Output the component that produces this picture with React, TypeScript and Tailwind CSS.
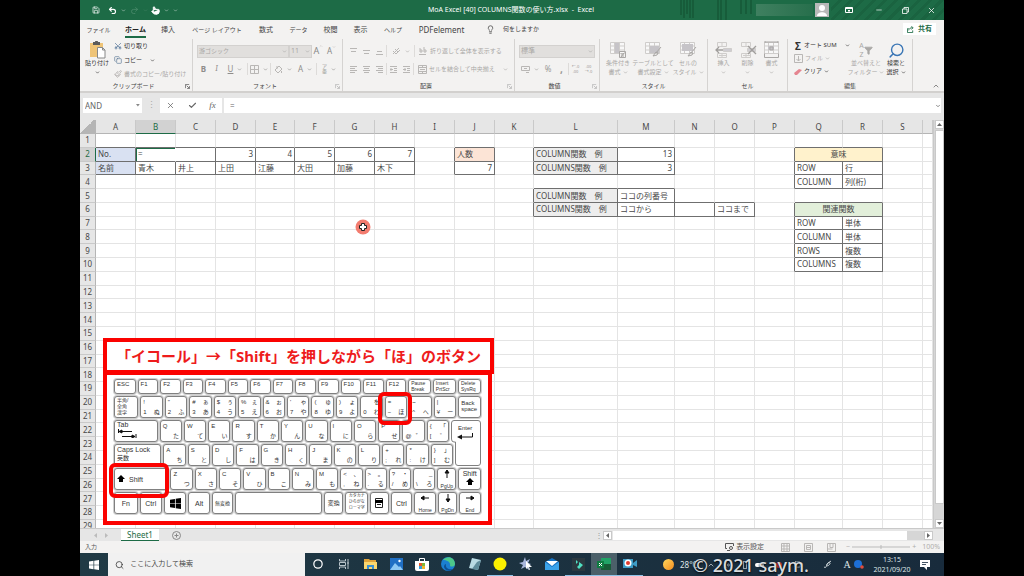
import React from 'react';
import clsx from 'clsx';
import { ChevronDown, ChevronUp, Lightbulb, Search, Check, X, Minus, Square, Scissors, Copy, Paintbrush, Undo2, Redo2, Save, Pointer, Filter, Circle } from 'lucide-react';

type Kids = { children?: React.ReactNode };

const tabs = [
  { name: 'ファイル', cls: 'w-[37px] text-[6px]' },
  { name: 'ホーム', cls: 'w-[37px] text-[7px]' },
  { name: '挿入', cls: 'w-[28px] text-[7px]' },
  { name: 'ページ レイアウト', cls: 'w-[70px] text-[6px]' },
  { name: '数式', cls: 'w-[28px] text-[7px]' },
  { name: 'データ', cls: 'w-[37px] text-[6px]' },
  { name: '校閲', cls: 'w-[27px] text-[7px]' },
  { name: '表示', cls: 'w-[33px] text-[7px]' },
  { name: 'ヘルプ', cls: 'w-[32px] text-[6px]' },
  { name: 'PDFelement', cls: 'w-[65px] text-[8px]' },
];

/* ---------- title bar ---------- */

function TitleBar() {
  return (
    <header className="relative flex h-5 shrink-0 items-center bg-[#1d6b46] text-white">
      <div className="flex flex-1 items-center pl-3">
        <button aria-label="上書き保存" className="w-4"><Save size={8} /></button>
        <button aria-label="元に戻す" className="flex w-[22px] items-center gap-1"><Undo2 size={9} strokeWidth={3} /><ChevronDown size={5} /></button>
        <button aria-label="やり直し" className="flex w-[21px] items-center gap-1 text-[#4f8d6f]"><Redo2 size={9} /><ChevronDown size={5} /></button>
        <button aria-label="タッチ" className="flex w-[22px] items-center gap-1"><Pointer size={9} fill="white" /><ChevronDown size={5} /></button>
        <button aria-label="カスタマイズ"><ChevronDown size={5} /></button>
      </div>
      <h1 className="mr-[14px] text-[7px] whitespace-nowrap">MoA Excel [40] COLUMNS関数の使い方.xlsx&nbsp; -&nbsp; Excel</h1>
      <div className="flex h-full flex-1 items-center justify-end">
        <svg className="h-5 w-[76px]" viewBox="0 0 76 20" stroke="#175c3a" fill="none">
          <path d="M1 0v15M4 0v18M7 0v14M10 0v18M13 0v18M38 0v20M41 0v20M46 0v20M61 0v14M66 0v14M71 0v14" strokeWidth="2" />
        </svg>
        <span className="h-3 w-[57px] bg-linear-to-r from-[#3f8060] to-[#276f4c]" />
        <svg className="mx-[2px] size-[14px]" viewBox="0 0 14 14">
          <path fill="#b9b9b9" d="M0 0h14v14H0z" />
          <circle cx="7" cy="5" r="3" fill="#fff" />
          <path fill="#fff" d="M2 13c0-5 10-5 10 0z" />
        </svg>
        <div className="flex h-full items-center bg-[repeating-linear-gradient(135deg,#1d6b46_0_5px,#1a6340_5px_8px)]">
          <button aria-label="リボンの表示オプション" className="flex w-[35px] justify-center">
            <svg width="8" height="6" viewBox="0 0 8 6" fill="none" stroke="white"><path d="M.5.5h7v5h-7zM.5 1.5h7M4 5V3M3 3.5h2" /></svg>
          </button>
          <button aria-label="最小化" className="flex w-[26px] justify-center"><Minus size={8} /></button>
          <button aria-label="元に戻す(縮小)" className="flex w-[26px] justify-center">
            <svg width="7" height="7" viewBox="0 0 7 7" fill="none" stroke="white" strokeWidth=".8"><path d="M.5 2h4.500v4.500H.5zM2 2V.5h4.500V5H5" /></svg>
          </button>
          <button aria-label="閉じる" className="flex w-[26px] justify-center"><X size={9} /></button>
        </div>
      </div>
    </header>
  );
}

function TabBar() {
  return (
    <nav className="flex h-[18px] shrink-0 items-center bg-[#f3f2f1] text-[#444]">
      {tabs.map((t, i) => (
        <button key={t.name} className={clsx('flex h-full shrink-0 items-center justify-center whitespace-nowrap', t.cls, i === 1 && 'font-bold text-[#222]')}>
          <span className={clsx('border-b-2 pt-1 leading-3', i === 1 ? 'border-[#1d6b46]' : 'border-transparent')}>{t.name}</span>
        </button>
      ))}
      <Lightbulb size={9} className="ml-3 shrink-0" />
      <button className="ml-2 text-[6px] whitespace-nowrap">何をしますか</button>
      <button className="mr-2 ml-auto flex h-3 items-center gap-1 bg-white px-1 text-[7px] font-bold text-[#1d6b46]">
        <svg width="7" height="7" viewBox="0 0 8 8" fill="none" stroke="currentColor"><path d="M2 3H.5v4.500h6V5M2 5c0-2 2-3 4-3M5 .5 7 2 5 4" /></svg>
        共有
      </button>
    </nav>
  );
}

/* ---------- ribbon ---------- */

function Group({ label, width, launcher, children }: Kids & { label: string; width: string; launcher?: string }) {
  return (
    <section className={clsx('flex shrink-0 flex-col border-r border-[#d5d3d1] text-[#aaa8a6]', width)}>
      <div className="h-[42px]">{children}</div>
      <div className="flex h-[10px] items-center px-[2px] text-[6px] leading-[10px] text-[#444]">
        <span className="flex-1 text-center">{label}</span>
        {launcher && (
          <svg width="5" height="5" viewBox="0 0 6 6" fill="none" stroke={launcher}><path d="M.5 5V.5H5M2 2l3 3M5.500 2.500v3h-3" /></svg>
        )}
      </div>
    </section>
  );
}

const Caret = () => <ChevronDown size={5} strokeWidth={3} className="shrink-0" />;
const Bar = () => <span className="h-[12px] w-px shrink-0 bg-[#dddbd9]" />;

function Tool({ label, w = 'w-[13px]', caret, children }: Kids & { label: string; w?: string; caret?: boolean }) {
  return (
    <button aria-label={label} className={clsx('flex shrink-0 items-center justify-center gap-1 text-[8px]', w)}>
      {children}
      {caret && <Caret />}
    </button>
  );
}

function Lines({ d }: { d: string }) {
  return <svg width="9" height="9" viewBox="0 0 9 9" fill="none" stroke="#b9b7b5"><path d={d} /></svg>;
}

function BigTool({ icon, lines, w, dark }: { icon: React.ReactNode; lines: string[]; w: string; dark?: boolean }) {
  return (
    <button className={clsx('flex shrink-0 flex-col items-center pt-[2px] text-[6px] leading-[9px] whitespace-nowrap', w, dark && 'text-[#333]')}>
      <span className="flex h-[18px] items-center justify-center">{icon}</span>
      {lines.map((l, i) => (
        <span key={l} className="flex items-center gap-[2px]">{l}{i === 1 && <Caret />}</span>
      ))}
      {lines.length === 1 && <span className="flex h-[9px] items-center"><Caret /></span>}
    </button>
  );
}

const GridIcon = ({ extra, fill }: { extra: string; fill?: string }) => (
  <svg width="18" height="18" viewBox="0 0 18 18" fill="none" stroke="#cfcdcb">
    <path fill="#f8f8f8" d="M1.500 1.500h14v11h-14zM1.500 5h14M1.500 9h14M5.500 1.500v11M10.500 1.500v11" />
    {fill && <path d={fill} fill="#c6c4c8" stroke="none" />}
    <path d={extra} stroke="#a9a7a5" />
  </svg>
);

const CellsIcon = ({ extra }: { extra: string }) => (
  <svg width="18" height="18" viewBox="0 0 18 18" fill="none" stroke="#cfcdcb">
    <path d="M2.500 1.500h9v4h-9zM7 1.500v4M2.500 12.500h9v4h-9zM7 12.500v4M4 14.500h7" />
    <path fill="#cfcdd2" d="M8.500 7.500h8v3h-8z" />
    <path d={extra} stroke="#a09e9c" strokeWidth="1.300" />
  </svg>
);

function Ribbon() {
  return (
    <div className="flex h-[55px] shrink-0 border-b-2 border-[#d2d0ce] bg-[#f3f2f1] pt-px">
      <Group label="クリップボード" width="w-[113px]" launcher="#666">
        <div className="flex">
          <BigTool w="w-[34px]" dark lines={['貼り付け']} icon={
            <svg width="18" height="18" viewBox="0 0 18 18">
              <path fill="#efc477" d="M2 2h13v14H2z" />
              <path fill="#5b5b5b" d="M5 1h2c0-2 3-2 3 0h2v3H5z" />
              <path fill="#fff" stroke="#888" d="M9.500 6.500h5l2.500 2.500v8h-7.500zM14.500 6.500V9H17" />
            </svg>
          } />
          <div className="flex flex-col text-[6px] whitespace-nowrap text-[#333]">
            <button className="flex h-[14px] items-center gap-[2px]"><Scissors size={8} className="-rotate-90 text-[#4a6c94]" />切り取り</button>
            <button className="flex h-[14px] items-center gap-[2px]"><Copy size={8} className="text-[#5c7896]" />コピー<span className="w-1" /><Caret /></button>
            <button className="flex h-[14px] items-center gap-[2px] text-[#aaa8a6]"><Paintbrush size={8} />書式のコピー/貼り付け</button>
          </div>
        </div>
      </Group>

      <Group label="フォント" width="w-[150px]" launcher="#bbb">
        <div className="flex h-6 items-center pl-1">
          <button className="flex h-[13px] w-[92px] items-center justify-between border border-[#d3d1cf] bg-[#e1dfdd] px-px text-[6px]">游ゴシック<Caret /></button>
          <button className="flex h-[13px] w-[23px] items-center justify-between border border-[#d3d1cf] bg-[#e1dfdd] px-px text-[7px]">11<Caret /></button>
          <Tool label="拡大"><span className="text-[9px] text-[#888]">A</span><ChevronUp size={4} className="-ml-1 self-start" /></Tool>
          <Tool label="縮小"><span className="text-[8px] text-[#888]">A</span><ChevronDown size={4} className="-ml-1 self-start" /></Tool>
        </div>
        <div className="flex items-center pl-1 text-[#8f8d8b]">
          <Tool label="太字"><b>B</b></Tool>
          <Tool label="斜体"><i className="font-serif">I</i></Tool>
          <Tool label="下線" w="w-[24px]" caret><u>U</u></Tool>
          <Bar />
          <Tool label="罫線" w="w-[22px]" caret><Lines d="M.5.5h8v8h-8zM4.500 0v9M0 4.500h9" /></Tool>
          <Bar />
          <Tool label="塗りつぶし" w="w-[23px]" caret><Lines d="M1 5l4-4 3 3-4 4zM7.500 6v2M3 1v3" /></Tool>
          <Tool label="文字色" w="w-[22px]" caret>A</Tool>
          <Bar />
          <Tool label="ふりがな" w="w-[24px]" caret><span className="flex flex-col text-[5px] leading-[5px]"><span>ア</span><span>亜</span></span></Tool>
        </div>
      </Group>

      <Group label="配置" width="w-[172px]" launcher="#bbb">
        <div className="flex h-6 items-center pl-1">
          <Tool label="上揃え"><Lines d="M1 1.500h7M2 4.500h5" /></Tool>
          <Tool label="上下中央"><Lines d="M1 3.500h7M2 6.500h5" /></Tool>
          <Tool label="下揃え"><Lines d="M2 4.500h5M1 7.500h7" /></Tool>
          <Bar />
          <Tool label="方向" w="w-[27px]" caret><Lines d="M1 4l3 3M3 2l3 3M1 7l6-6M4 7l4-4" /></Tool>
          <Bar />
          <button className="ml-1 flex items-center gap-[2px] text-[6px] whitespace-nowrap"><Lines d="M1 1v4h2V3H1M5 0v5h2V3H5M0 7.500h7" />折り返して全体を表示する</button>
        </div>
        <div className="flex items-center pl-1">
          <Tool label="左揃え"><Lines d="M1 1.500h7M1 3.500h5M1 5.500h7M1 7.500h5" /></Tool>
          <Tool label="中央揃え"><Lines d="M1 1.500h7M2 3.500h5M1 5.500h7M2 7.500h5" /></Tool>
          <Tool label="右揃え"><Lines d="M1 1.500h7M3 3.500h5M1 5.500h7M3 7.500h5" /></Tool>
          <Bar />
          <Tool label="インデント減"><Lines d="M1 1.500h7M5 3.500h3M5 5.500h3M1 7.500h7M4 4.500H1M2 3v3" /></Tool>
          <Tool label="インデント増"><Lines d="M1 1.500h7M5 3.500h3M5 5.500h3M1 7.500h7M4 4.500H1M3 3v3" /></Tool>
          <Bar />
          <button className="ml-1 flex items-center gap-[2px] text-[6px] whitespace-nowrap"><Lines d="M.5.5h8v8h-8zM.5 2.500h8M.5 6.500h8M4.500 0v2M4.500 7v2M2 4.500h5" />セルを結合して中央揃え<span className="w-1" /><Caret /></button>
        </div>
      </Group>

      <Group label="数値" width="w-[85px]" launcher="#bbb">
        <div className="flex h-6 items-center px-1">
          <button className="flex h-[13px] flex-1 items-center justify-between border border-[#d3d1cf] bg-[#e1dfdd] px-px text-[7px]">標準<Caret /></button>
        </div>
        <div className="flex items-center pl-1 text-[#9a9896]">
          <Tool label="通貨" w="w-[22px]" caret><Lines d="M.5 1.500h8v4h-8zM3 3.500h3M5 7.500h3" /></Tool>
          <Tool label="パーセント" w="w-[14px]">%</Tool>
          <Tool label="桁区切り"><b className="text-[10px] leading-none">,</b></Tool>
          <Bar />
          <Tool label="小数点以下の桁数を増やす"><span className="text-[4px] leading-[5px]">←.0<br />.00</span></Tool>
          <Tool label="小数点以下の桁数を減らす"><span className="text-[4px] leading-[5px]">.00<br />→.0</span></Tool>
        </div>
      </Group>

      <Group label="スタイル" width="w-[108px]">
        <div className="flex">
          <BigTool w="w-[36px]" lines={['条件付き', '書式']} icon={<GridIcon fill="M6 2h4v10H6z" extra="M10.500 10.500h6v6h-6zM12 13h3M12 15h3M15 12l-3 4" />} />
          <BigTool w="w-[34px]" lines={['テーブルとして', '書式設定']} icon={<GridIcon fill="M6 5h9v7H6z" extra="M17 6l-5 6M12 11l-3 4 4-1 1-2z" />} />
          <BigTool w="w-[36px]" lines={['セルの', 'スタイル']} icon={<GridIcon fill="M3 3h11v7H3z" extra="M17 6l-5 6M12 11l-3 4 4-1 1-2z" />} />
        </div>
      </Group>

      <Group label="セル" width="w-[80px]">
        <div className="flex justify-center">
          <BigTool w="w-[24px]" lines={['挿入']} icon={<CellsIcon extra="M8 9H1M4 6L1 9l3 3" />} />
          <BigTool w="w-[24px]" lines={['削除']} icon={<CellsIcon extra="M9 5l8 8M17 5l-8 8" />} />
          <BigTool w="w-[24px]" lines={['書式']} icon={<GridIcon fill="M5 5h6v4H5z" extra="M2 1h13M2 0v2M15 0v2M1.500 12.500v4h14v-4M7 6h3v3H7z" />} />
        </div>
      </Group>

      <Group label="編集" width="w-[125px]">
        <div className="flex">
          <div className="flex w-[62px] flex-col pl-[6px] text-[6px] whitespace-nowrap">
            <button className="flex h-[13px] items-center gap-[2px] text-[#333]"><b className="w-2 text-[10px] leading-none">Σ</b>オート SUM<span className="w-1" /><Caret /></button>
            <button className="flex h-[13px] items-center gap-[2px]"><Lines d="M.5.5h8v8h-8zM4.500 2v5M2.500 5l2 2 2-2" />フィル<Caret /></button>
            <button className="flex h-[13px] items-center gap-[2px] text-[#333]">
              <svg width="8" height="8" viewBox="0 0 8 8"><path fill="#e58590" d="M0 5l5-4 3 1-5 5-2 0z" /></svg>
              クリア<Caret />
            </button>
          </div>
          <BigTool w="w-[32px]" lines={['並べ替えと', 'フィルター']} icon={
            <span className="flex items-center text-[7px] leading-[9px]"><span className="flex flex-col"><span>A</span><span>Z</span></span><Filter size={9} fill="currentColor" /></span>
          } />
          <BigTool w="w-[28px]" dark lines={['検索と', '選択']} icon={<Search size={17} className="-scale-x-100 text-[#3a76b5]" />} />
        </div>
      </Group>
      <button aria-label="リボンを折りたたむ" className="mr-1 mb-px ml-auto self-end"><ChevronUp size={8} className="text-[#555]" /></button>
    </div>
  );
}

function FormulaBar() {
  return (
    <div className="flex h-[27px] shrink-0 bg-[#e6e6e6] px-[3px] pt-[5px] pb-[7px] text-[#666]">
      <div className="flex w-[59px] items-center bg-white px-[2px]">
        <input aria-label="名前ボックス" defaultValue="AND" className="w-full min-w-0 text-[8px] outline-none" />
        <svg width="4" height="3" viewBox="0 0 4 3"><path fill="#888" d="M0 0h4L2 2.500z" /></svg>
      </div>
      <span className="w-[18px] text-center text-[9px] leading-[14px] text-[#aaa]">⋮</span>
      <div className="flex w-[62px] items-center justify-around bg-white">
        <button aria-label="キャンセル"><X size={9} /></button>
        <button aria-label="入力"><Check size={9} strokeWidth={3} /></button>
        <button aria-label="関数の挿入" className="font-['Liberation_Serif',serif] text-[9px] leading-none italic">fx</button>
      </div>
      <div className="ml-[2px] flex flex-1 items-center bg-white px-[6px]">
        <input aria-label="数式バー" defaultValue="=" className="w-full text-[8px] outline-none" />
      </div>
      <span className="flex w-2 items-center justify-end bg-white"><ChevronDown size={6} strokeWidth={3} /></span>
    </div>
  );
}

/* ---------- sheet ---------- */

const columns = [
  ['A', 40], ['B', 40], ['C', 40], ['D', 40], ['E', 39], ['F', 40], ['G', 40], ['H', 40], ['I', 40], ['J', 40],
  ['K', 39], ['L', 84], ['M', 57], ['N', 40], ['O', 40], ['P', 40], ['Q', 48], ['R', 40], ['S', 40], ['', 10],
] as const;
const letters = columns.map(c => c[0]).join('');

const values: Record<string, string> = {
  A2: 'No.', D2: '3', E2: '4', F2: '5', G2: '6', H2: '7',
  A3: '名前', B3: '青木', C3: '井上', D3: '上田', E3: '江藤', F3: '大田', G3: '加藤', H3: '木下',
  J2: '人数', J3: '7',
  L2: 'COLUMN関数　例', M2: '13', L3: 'COLUMNS関数　例', M3: '3',
  L5: 'COLUMN関数　例', M5: 'ココの列番号', L6: 'COLUMNS関数　例', M6: 'ココから', O6: 'ココまで',
  Q2: '意味', Q3: 'ROW', R3: '行', Q4: 'COLUMN', R4: '列(桁)',
  Q6: '関連関数', Q7: 'ROW', R7: '単体', Q8: 'COLUMN', R8: '単体', Q9: 'ROWS', R9: '複数', Q10: 'COLUMNS', R10: '複数',
};

const fills: Record<string, string> = {
  A2: 'bg-[#d9e1f2]', A3: 'bg-[#d9e1f2]', J2: 'bg-[#fce4d6]',
  L2: 'bg-[#ededed]', L3: 'bg-[#ededed]', L5: 'bg-[#ededed]', L6: 'bg-[#ededed]',
  Q2: 'bg-[#fff2cc]', Q6: 'bg-[#e2efda]',
};

// framed ranges: first column, first row, last column, last row
const frames: [string, number, string, number][] = [
  ['A', 2, 'H', 3], ['J', 2, 'J', 3], ['L', 2, 'M', 3], ['L', 5, 'M', 5], ['L', 6, 'O', 6], ['Q', 2, 'R', 4], ['Q', 6, 'R', 10],
];

function framed(c: number, r: number) {
  return frames.some(([c1, r1, c2, r2]) => c >= letters.indexOf(c1) && c <= letters.indexOf(c2) && r >= r1 && r <= r2);
}

function Cell({ c, r }: { c: number; r: number }) {
  const id = columns[c][0] + r;
  const text = values[id] ?? '';
  const merged = id === 'Q2' || id === 'Q6';
  const right = framed(c, r) || (c + 1 < letters.length && framed(c + 1, r));
  const bottom = framed(c, r) || framed(c, r + 1);
  return (
    <td
      colSpan={merged ? 2 : 1}
      className={clsx(
        'overflow-hidden border-r border-b px-[2px] whitespace-nowrap',
        fills[id],
        id === 'B2' ? 'border-r-white' : right ? 'border-r-[#6f6f6f]' : 'border-r-[#e4e4e4]',
        bottom ? 'border-b-[#6f6f6f]' : 'border-b-[#e4e4e4]',
        merged ? 'text-center' : /^\d+$/.test(text) ? 'text-right' : 'text-left',
        id === 'B2' && 'shadow-[inset_1px_1px_0_#1d6b46]'
      )}
    >
      {id === 'B2' ? <input aria-label="B2" defaultValue="=" className="block h-[10px] w-full text-[8px] outline-none" /> : text}
    </td>
  );
}

function Sheet() {
  const rows = Array.from({ length: 29 }, (_, i) => i + 1);
  return (
    <table className="h-[414px] w-full table-fixed border-separate border-spacing-0 bg-white text-[8px] leading-[10px] text-[#484848]">
      <colgroup>
        <col style={{ width: 16 }} />
        {columns.map(([name, w]) => <col key={name} style={{ width: w }} />)}
      </colgroup>
      <thead>
        <tr className="h-[14px]">
          <th className="border-r border-b border-[#b5b5b5] bg-[linear-gradient(135deg,#e6e6e6_50%,#b5b5b5_50%)]" />
          {columns.map(([name]) => (
            <th key={name} className={clsx('border-r border-b border-r-[#c9c9c9] font-normal', name === 'B' ? 'border-b-[#1d6b46] bg-[#d2d2d2] text-[#1d6b46]' : 'border-b-[#b5b5b5] bg-[#e6e6e6]')}>{name}</th>
          ))}
        </tr>
      </thead>
      <tbody>
        {rows.map(r => (
          <tr key={r}>
            <th className={clsx('border-r border-b border-b-[#c9c9c9] font-normal', r === 2 ? 'border-r-[#1d6b46] bg-[#d2d2d2] text-[#1d6b46]' : 'border-r-[#b5b5b5] bg-[#e6e6e6]')}>{r}</th>
            {columns.map(([name], c) => (name === 'R' && (r === 2 || r === 6) ? null : <Cell key={name} c={c} r={r} />))}
          </tr>
        ))}
      </tbody>
    </table>
  );
}

/* ---------- keyboard ---------- */

type KeyDef = { w: number; at?: string[]; node?: React.ReactNode };

// four corners: top left, top right, bottom left, bottom right
const corner = (s: string, w = 63): KeyDef[] => s.split(' ').map(k => ({ w, at: k.split('').map(ch => (ch === '␣' ? '' : ch)) }));
const alpha = (s: string): KeyDef[] => s.split(' ').map(k => ({ w: 63, at: [k[0], '', '', k[1]] }));

const two = (a: string, b: string) => <span className="block text-[5px] leading-[6px]">{a}<br />{b}</span>;

const fnRow: KeyDef[] = [
  { w: 62, node: 'ESC' },
  ...Array.from({ length: 12 }, (_, i) => ({ w: 59, node: `F${i + 1}` })),
  { w: 65, node: two('Pause', 'Break') },
  { w: 66, node: two('Insert', 'PrtScr') },
  { w: 66, node: two('Delete', 'SysRq') },
];
const digitRow: KeyDef[] = [
  { w: 68, node: <span className="block text-[5px] leading-[6px]">半角/<br />全角<br />漢字</span> },
  ...corner('!␣1ぬ "␣2ふ #ぁ3あ $ぅ4う %ぇ5え &ぉ6お \'ゃ7や (ゅ8ゆ )ょ9よ ␣を0わ =␣−ほ ~␣^へ |␣¥ー'),
  { w: 64, node: <span className="block pt-[3px] text-[6px] leading-[6px]">Back<br />space</span> },
];
const tabRow: KeyDef[] = [
  {
    w: 122,
    node: (
      <span className="block text-[7px] leading-[8px]">
        Tab
        <svg width="20" height="9" viewBox="0 0 20 9" fill="none" stroke="#111"><path d="M1.500 0v4M2 2.500h13M19 5v4M5 7.500h13" /><path fill="#111" d="M5 1L2 2.500 5 4zM15 6l3 1.500L15 9z" /></svg>
      </span>
    ),
  },
  ...alpha('Qた Wて Eい Rす Tか Yん Uな Iに Oら Pせ'),
  ...corner('␣␣@゛ {「[゜'),
];
const capsRow: KeyDef[] = [
  { w: 132, node: <span className="block pt-px text-[7px] leading-[8px] whitespace-nowrap">Caps Lock<br /><span className="text-[6px]">英数</span></span> },
  ...alpha('Aち Sと Dし Fは Gき Hく Jま Kの Lり'),
  ...corner('+␣;れ *␣:け }」]む'),
];
const shiftArrow = <svg className="inline" width="8" height="8" viewBox="0 0 8 8"><path d="M4 0l4 4H6v3H2V4H0z" /></svg>;
const arrow = (rot: string, label: string) => (
  <span className="flex h-full flex-col items-center justify-between text-[5px] leading-[6px]">
    <svg className={rot} width="10" height="10" viewBox="0 0 10 10" stroke="#111" fill="none"><path d="M1 5h8" /><path fill="#111" d="M1 5l3-2v4z" /></svg>
    {label}
  </span>
);
const shiftRow: KeyDef[] = [
  { w: 152, node: <span className="flex h-full items-center gap-1 text-[7px]">{shiftArrow}Shift</span> },
  ...alpha('Zつ Xさ Cそ Vひ Bこ Nみ Mも'),
  ...corner('<、,ね >。.る ?・/め ␣_\\ろ'),
  { w: 54, node: arrow('rotate-90', 'PgUp') },
  { w: 64, node: <span className="flex flex-col items-center text-[7px] leading-[9px]">Shift{shiftArrow}</span> },
];
const mid = (t: React.ReactNode, cls = 'text-[7px]') => <span className={clsx('flex h-full items-center justify-center whitespace-nowrap', cls)}>{t}</span>;
const bottomRow: KeyDef[] = [
  { w: 68, node: mid('Fn') },
  { w: 65, node: mid('Ctrl') },
  { w: 64, node: mid(<svg width="11" height="11" viewBox="0 0 10 10"><path d="M0 1.500l4.500-.7v3.900H0zM5.200.7L10 0v4.700H5.200zM0 5.300h4.500v3.900L0 8.500zM5.200 5.300H10V10l-4.800-.7z" /></svg>) },
  { w: 64, node: mid('Alt') },
  { w: 60, node: mid('無変換', 'text-[5px]') },
  { w: 250 },
  { w: 55, node: mid('変換', 'text-[6px]') },
  { w: 66, node: <span className="block text-center text-[4px] leading-[6px] whitespace-nowrap">カタカナ<br />ひらがな<br />ローマ字</span> },
  { w: 54, node: mid(<svg width="8" height="10" viewBox="0 0 8 10"><path fill="none" stroke="#222" d="M.5.5h7v9h-7zM2 6.500h4" /><path d="M0 2h8v3H0z" /></svg>) },
  { w: 62, node: mid('Ctrl') },
  { w: 64, node: arrow('', 'Home') },
  { w: 54, node: arrow('-rotate-90', 'PgDn') },
  { w: 64, node: arrow('rotate-180', 'End') },
];

function KeyRow({ keys, cls = 'h-[22px]' }: { keys: KeyDef[]; cls?: string }) {
  return (
    <div className={clsx('flex gap-[2px]', cls)}>
      {keys.map((k, i) => (
        // padding and border already take 6px of every key
        <div key={i} className="min-w-0 basis-0 rounded-[3px] border border-[#808080] bg-white px-[2px] text-[6px] leading-[9px] text-[#333] ring-1 ring-[#cfcfcf]" style={{ flexGrow: k.w - 18 }}>
          {k.at ? (
            <div className="grid h-full grid-cols-2 grid-rows-2 items-center leading-[9px]">
              {k.at.map((ch, j) => <span key={j} className={j % 2 ? 'text-right' : 'text-left'}>{ch}</span>)}
            </div>
          ) : k.node}
        </div>
      ))}
    </div>
  );
}

function Keyboard() {
  return (
    <figure className="absolute top-[218px] left-[23px] w-[391px] font-['Liberation_Sans','Noto_Sans_CJK_JP',sans-serif]">
      <figcaption className="flex h-[36px] items-center justify-center border-4 border-[#fb0200] bg-white font-['Noto_Sans','Noto_Sans_CJK_JP',sans-serif] text-[15px] font-bold whitespace-nowrap text-[#ee1c1c]">
        「イコール」→「Shift」を押しながら「ほ」のボタン
      </figcaption>
      <div className="-mt-[3px] mr-[2px] flex flex-col gap-[2px] border-4 border-[#fb0200] bg-white px-[7px] pt-1 pb-[7px]">
        <KeyRow keys={fnRow} cls="h-[15px]" />
        <KeyRow keys={digitRow} />
        <div className="flex">
          <div className="flex flex-1 flex-col gap-[2px]">
            <KeyRow keys={tabRow} />
            <KeyRow keys={capsRow} cls="-mr-1 h-[22px]" />
          </div>
          <div className="relative ml-[2px] w-[30px] text-[6px] leading-[8px] text-[#333]">
            <svg className="h-[46px] w-full" viewBox="0 0 30 46" fill="#fff" stroke="#808080">
              <path d="M3 .5h24q2.500 0 2.500 2.500v40q0 2.500-2.500 2.500H7q-2.500 0-2.500-2.500V22H3Q.5 22 .5 19V3Q.5.5 3 .5z" />
              <path fill="none" stroke="#111" d="M21.500 13v4H9" />
              <path fill="#111" stroke="none" d="M6 17l5-2.500v5z" />
            </svg>
            <span className="absolute top-1 left-[7px]">Enter</span>
          </div>
        </div>
        <KeyRow keys={shiftRow} />
        <KeyRow keys={bottomRow} />
      </div>
      <span className="absolute top-[125px] left-[6px] h-[35px] w-[60px] rounded-md border-4 border-[#fb0200]" />
      <span className="absolute top-[54px] left-[275px] h-[33px] w-[34px] rounded-md border-4 border-[#fb0200]" />
    </figure>
  );
}

const arrowBox = "flex size-[9px] items-center justify-center border border-[#c9c9c9] bg-white text-[#555]";
const Tri = ({ d }: { d: string }) => <svg width="5" height="5" viewBox="0 0 5 5"><path fill="#666" d={d} /></svg>;

function SheetArea() {
  return (
    <main className="relative flex min-h-0 flex-1 overflow-hidden">
      <div className="min-w-0 flex-1"><Sheet /></div>
      <div className="flex w-[11px] shrink-0 flex-col items-center border-l border-[#c9c9c9] bg-[#d6d6d6]">
        <button aria-label="上へ" className={arrowBox}><Tri d="M0 4h5L2.500 1z" /></button>
        <span className="mt-px mb-[15px] w-[9px] flex-1 border border-[#c9c9c9] bg-white" />
        <button aria-label="下へ" className={arrowBox}><Tri d="M0 1h5L2.500 4z" /></button>
      </div>
      <Keyboard />
      <svg className="absolute top-[99px] left-[275px]" width="16" height="16" viewBox="0 0 16 16">
        <circle cx="8" cy="8" r="7.500" fill="#f37c6f" />
        <path fill="#fff" stroke="#222" d="M6.500 4.500h3v2h2v3h-2v2h-3v-2h-2v-3h2z" />
      </svg>
    </main>
  );
}

/* ---------- bottom bars ---------- */

function SheetTabs() {
  return (
    <div className="flex h-[13px] shrink-0 items-center border-t border-[#c9c9c9] bg-[#e6e6e6] text-[8px]">
      <span className="flex w-[41px] items-center justify-center gap-2">
        <svg width="3" height="5" viewBox="0 0 3 5"><path fill="#bbb" d="M3 0v5L0 2.500z" /></svg>
        <svg width="3" height="5" viewBox="0 0 3 5"><path fill="#bbb" d="M0 0v5l3-2.500z" /></svg>
      </span>
      <button className="flex h-full w-[38px] items-center justify-center border-b border-[#1d6b46] bg-white text-[#1d6b46]">Sheet1</button>
      <button aria-label="新しいシート" className="ml-[13px]">
        <svg width="9" height="9" viewBox="0 0 9 9" fill="none" stroke="#888"><circle cx="4.500" cy="4.500" r="4" /><path d="M4.500 2.500v4M2.500 4.500h4" /></svg>
      </button>
      <div className="ml-auto flex w-[349px] items-center">
        <span className="w-[8px] text-[8px] leading-none text-[#999]">⋮</span>
        <button aria-label="左へ" className={arrowBox}><Tri d="M4 0v5L1 2.500z" /></button>
        <span className="ml-px h-[9px] flex-1 bg-white" />
        <span className="h-[9px] w-[17px] bg-[#d6d6d6]" />
        <button aria-label="右へ" className={clsx(arrowBox, 'mr-[11px]')}><Tri d="M1 0v5l3-2.500z" /></button>
      </div>
    </div>
  );
}

function StatusBar() {
  return (
    <div className="flex h-3 shrink-0 items-center bg-[#f3f2f1] pr-1 pl-[5px] text-[6px] text-[#555]">
      <span>入力</span>
      <button className="mr-[17px] ml-auto flex items-center gap-[2px] text-[7px]">
        <svg width="9" height="8" viewBox="0 0 9 8" fill="none" stroke="#555"><path d="M2 5.500H.5v-5h8V3M2 7.500h3" /><circle cx="6" cy="5" r="1.500" /></svg>
        表示設定
      </button>
      <div className="mr-[10px] flex gap-[14px]">
        <Lines d="M.5.5h8v8h-8zM.5 3h8M.5 6h8M3 .5v8M6 .5v8" />
        <Lines d="M.5.5h8v8h-8zM2.500 2.500h4v4h-4zM3 4.500h3" />
        <Lines d="M.5.5h8v8h-8zM3 .5v4h3v-4M.5 6h5" />
      </div>
      <div className="flex items-center gap-[2px] text-[7px] text-[#b0aeac]">
        <span>−</span>
        <svg width="58" height="6" viewBox="0 0 58 6" stroke="#bbb"><path d="M0 3h58M29 1v4" /></svg>
        <span>+</span>
        <span className="ml-1">100%</span>
      </div>
    </div>
  );
}

const apps: { name: string; icon: React.ReactNode; open?: boolean; active?: boolean }[] = [
  { name: 'Cortana', icon: <Circle size={10} color="#fff" strokeWidth={3} /> },
  { name: 'タスク ビュー', icon: <svg width="10" height="10" viewBox="0 0 10 10" fill="none" stroke="#b8c4ca"><path d="M.5 0v2h6V0M.5 3.500h6v3h-6zM.5 10V8h6v2M9 0v10M8 4h2" /></svg> },
  { name: 'エクスプローラー', icon: <svg width="13" height="12" viewBox="0 0 13 12"><path fill="#e0a33a" d="M0 1h5l1 1h6v9H0z" /><path fill="#fbd66e" d="M0 4h13v7H0z" /><path fill="#3b8fd0" d="M3 7h7v4H8V9H5v2H3z" /></svg> },
  { name: 'フォト', icon: <svg width="13" height="12" viewBox="0 0 13 12"><path fill="#1f6fc4" d="M0 0h13v12H0z" /><path fill="#8cc8f4" d="M0 12l5-7 4 4 1-1 3 4z" /><circle cx="9.500" cy="3" r="1.200" fill="#fff" /></svg> },
  { name: 'Microsoft Store', icon: <svg width="14" height="14" viewBox="0 0 14 14"><path fill="none" stroke="#fff" d="M4.500 4V1.500h5V4" /><path fill="#fff" d="M0 4h14v8q0 2-2 2H2q-2 0-2-2z" /><path fill="#e4562c" d="M4 6h3v3H4z" /><path fill="#7cb83a" d="M7 6h3v3H7z" /><path fill="#2f9fe0" d="M4 9h3v3H4z" /><path fill="#f3b52c" d="M7 9h3v3H7z" /></svg> },
  { name: 'Edge', icon: <svg width="14" height="14" viewBox="0 0 14 14"><circle cx="7" cy="7" r="7" fill="#1b7fd1" /><path fill="#4dc88a" d="M2 3c4-5 12-3 12 4 0 3-4 3-5 2 1-4-3-6-7-6z" /><path fill="#0d4f94" d="M5 7c-1 4 3 6 7 5-3 3-8 2-9-2 0-2 1-3 2-3z" /></svg> },
  { name: 'メモ帳', icon: <svg width="13" height="13" viewBox="0 0 13 13"><path fill="#b9dbe4" d="M4 0l9 2-3 10-9-2z" /><path fill="#5f8c9b" d="M9 4l4-2-3 10-6-1z" /></svg> },
  { name: '録画', open: true, icon: <svg width="14" height="14" viewBox="0 0 14 14"><circle cx="7" cy="7" r="6.500" fill="#fbf000" /></svg> },
  { name: 'ポインター', icon: <svg width="14" height="14" viewBox="0 0 14 14"><path fill="#a8b6dc" d="M6 0l1 4 4-2-2 4 3 1-3 2 1 4-4-3-4 2 2-4-4-2 4-1z" /><path fill="#fff" d="M7 4v8l2-2 1 3 1-.5-1-2.500h3z" /></svg> },
  { name: 'メール', icon: <svg width="14" height="12" viewBox="0 0 14 12"><path fill="#1673c4" d="M0 4l7-4 7 4v8H0z" /><path fill="#fff" d="M1 3h12L7 8z" /><path fill="#3ba3ea" d="M0 4l7 5 7-5v8H0z" /></svg> },
  { name: 'Filmora', open: true, icon: <svg width="13" height="13" viewBox="0 0 13 13"><path fill="#2b3940" d="M0 0h13v13H0z" /><path fill="#4fe0c2" d="M4 2l2 2-2 2zM7 4l4 3-4 4-2-2 2-2z" /></svg> },
  { name: 'Excel', open: true, active: true, icon: <svg width="14" height="12" viewBox="0 0 14 12"><path fill="#21a366" d="M4 0h10v12H4z" /><path fill="#185c37" d="M9 6h5v6H4V6z" /><path fill="#107c41" d="M0 3h7v7H0z" /><path stroke="#fff" d="M2 5l3 3M5 5L2 8" /></svg> },
  { name: 'カメラ', open: true, icon: <svg width="14" height="12" viewBox="0 0 14 12"><path fill="#3d9cc6" d="M0 1h10v9H0zM10 5l4-3v7l-4-2z" /><circle cx="5" cy="5" r="3.500" fill="#fff" /><circle cx="5" cy="5" r="2" fill="#e23c2c" /></svg> },
];

function Taskbar() {
  return (
    <footer className="relative flex h-[23px] shrink-0 items-center bg-linear-to-r from-[#203a45] to-[#182b3c] text-[7px] text-[#dfe5e8]">
      <button aria-label="スタート" className="flex w-7 justify-center">
        <svg width="10" height="10" viewBox="0 0 10 10" fill="#fff"><path d="M0 1.500l4.500-.7v3.900H0zM5.200.7L10 0v4.700H5.200zM0 5.300h4.500v3.900L0 8.500zM5.200 5.300H10V10l-4.800-.7z" /></svg>
      </button>
      <label className="flex h-full w-[197px] items-center gap-[6px] bg-[#f1f1f1] px-[7px] text-[#333]">
        <Search size={10} />
        <input aria-label="検索" placeholder="ここに入力して検索" className="w-full text-[7px] outline-none placeholder:text-[#444]" />
      </label>
      {apps.map(a => (
        <button key={a.name} aria-label={a.name} className={clsx('flex h-full w-[26px] shrink-0 items-center justify-center border-b', a.open ? 'border-[#8fc3e8]' : 'border-transparent', a.active && 'bg-[#4b6069]')}>{a.icon}</button>
      ))}
      <div className="ml-auto flex items-center">
        <span className="size-[11px] rounded-full bg-linear-to-br from-[#ffd75a] to-[#f08c1e]" />
        <span className="ml-[6px] w-[27px] text-[8px]">28°C</span>
        <ChevronUp size={8} className="mr-[9px]" />
        <svg className="mr-[10px]" width="9" height="8" viewBox="0 0 9 8" fill="none" stroke="#9aa7ae"><path d="M2 1q-2 3 0 6M7 1q2 3 0 6" /><circle cx="4.500" cy="4" r="1" /></svg>
        <span className="mr-2 h-2 w-1 border border-[#9aa7ae]" />
        <span className="mr-3 h-1 w-[9px] rounded bg-white" />
        <span className="mr-3 size-[6px] rounded-full bg-[#c83434]" />
        <Square size={7} className="mr-[22px]" />
        <svg width="9" height="9" viewBox="0 0 9 9" fill="none" stroke="#cfd8dc"><path d="M1 7c3 2 2-3 4-4s3 0 1 2-3 0-1-2l3-2" /></svg>
        <span className="ml-2 w-[14px] text-center font-['Liberation_Serif',serif] text-[10px]">A</span>
        <svg width="10" height="9" viewBox="0 0 10 9"><circle cx="4" cy="4" r="4" fill="#1d6fd6" /><circle cx="8" cy="7" r="1.800" fill="#e04a3a" /></svg>
        <div className="ml-[6px] flex w-[44px] flex-col items-center leading-[10px]"><span>13:15</span><span>2021/09/20</span></div>
        <button aria-label="通知" className="mr-[14px] ml-[6px]">
          <svg width="10" height="10" viewBox="0 0 10 10"><path fill="#fff" d="M0 0h10v7H7v3L4 7H0z" /><path stroke="#456" d="M2 2.500h6M2 4.500h4" /></svg>
        </button>
      </div>
      <p className="absolute right-[135px] bottom-0 text-[18px] leading-[22px] font-medium whitespace-nowrap text-[#d9dcde] [text-shadow:0_1px_2px_#000]">© 2021 saym.</p>
    </footer>
  );
}

export default function App() {
  return (
    <div className="h-screen bg-black px-20 font-['Noto_Sans','Noto_Sans_CJK_JP',sans-serif]">
      <div className="flex h-full flex-col overflow-hidden bg-[#e6e6e6]">
        <TitleBar />
        <TabBar />
        <Ribbon />
        <FormulaBar />
        <SheetArea />
        <SheetTabs />
        <StatusBar />
        <Taskbar />
      </div>
    </div>
  );
}
